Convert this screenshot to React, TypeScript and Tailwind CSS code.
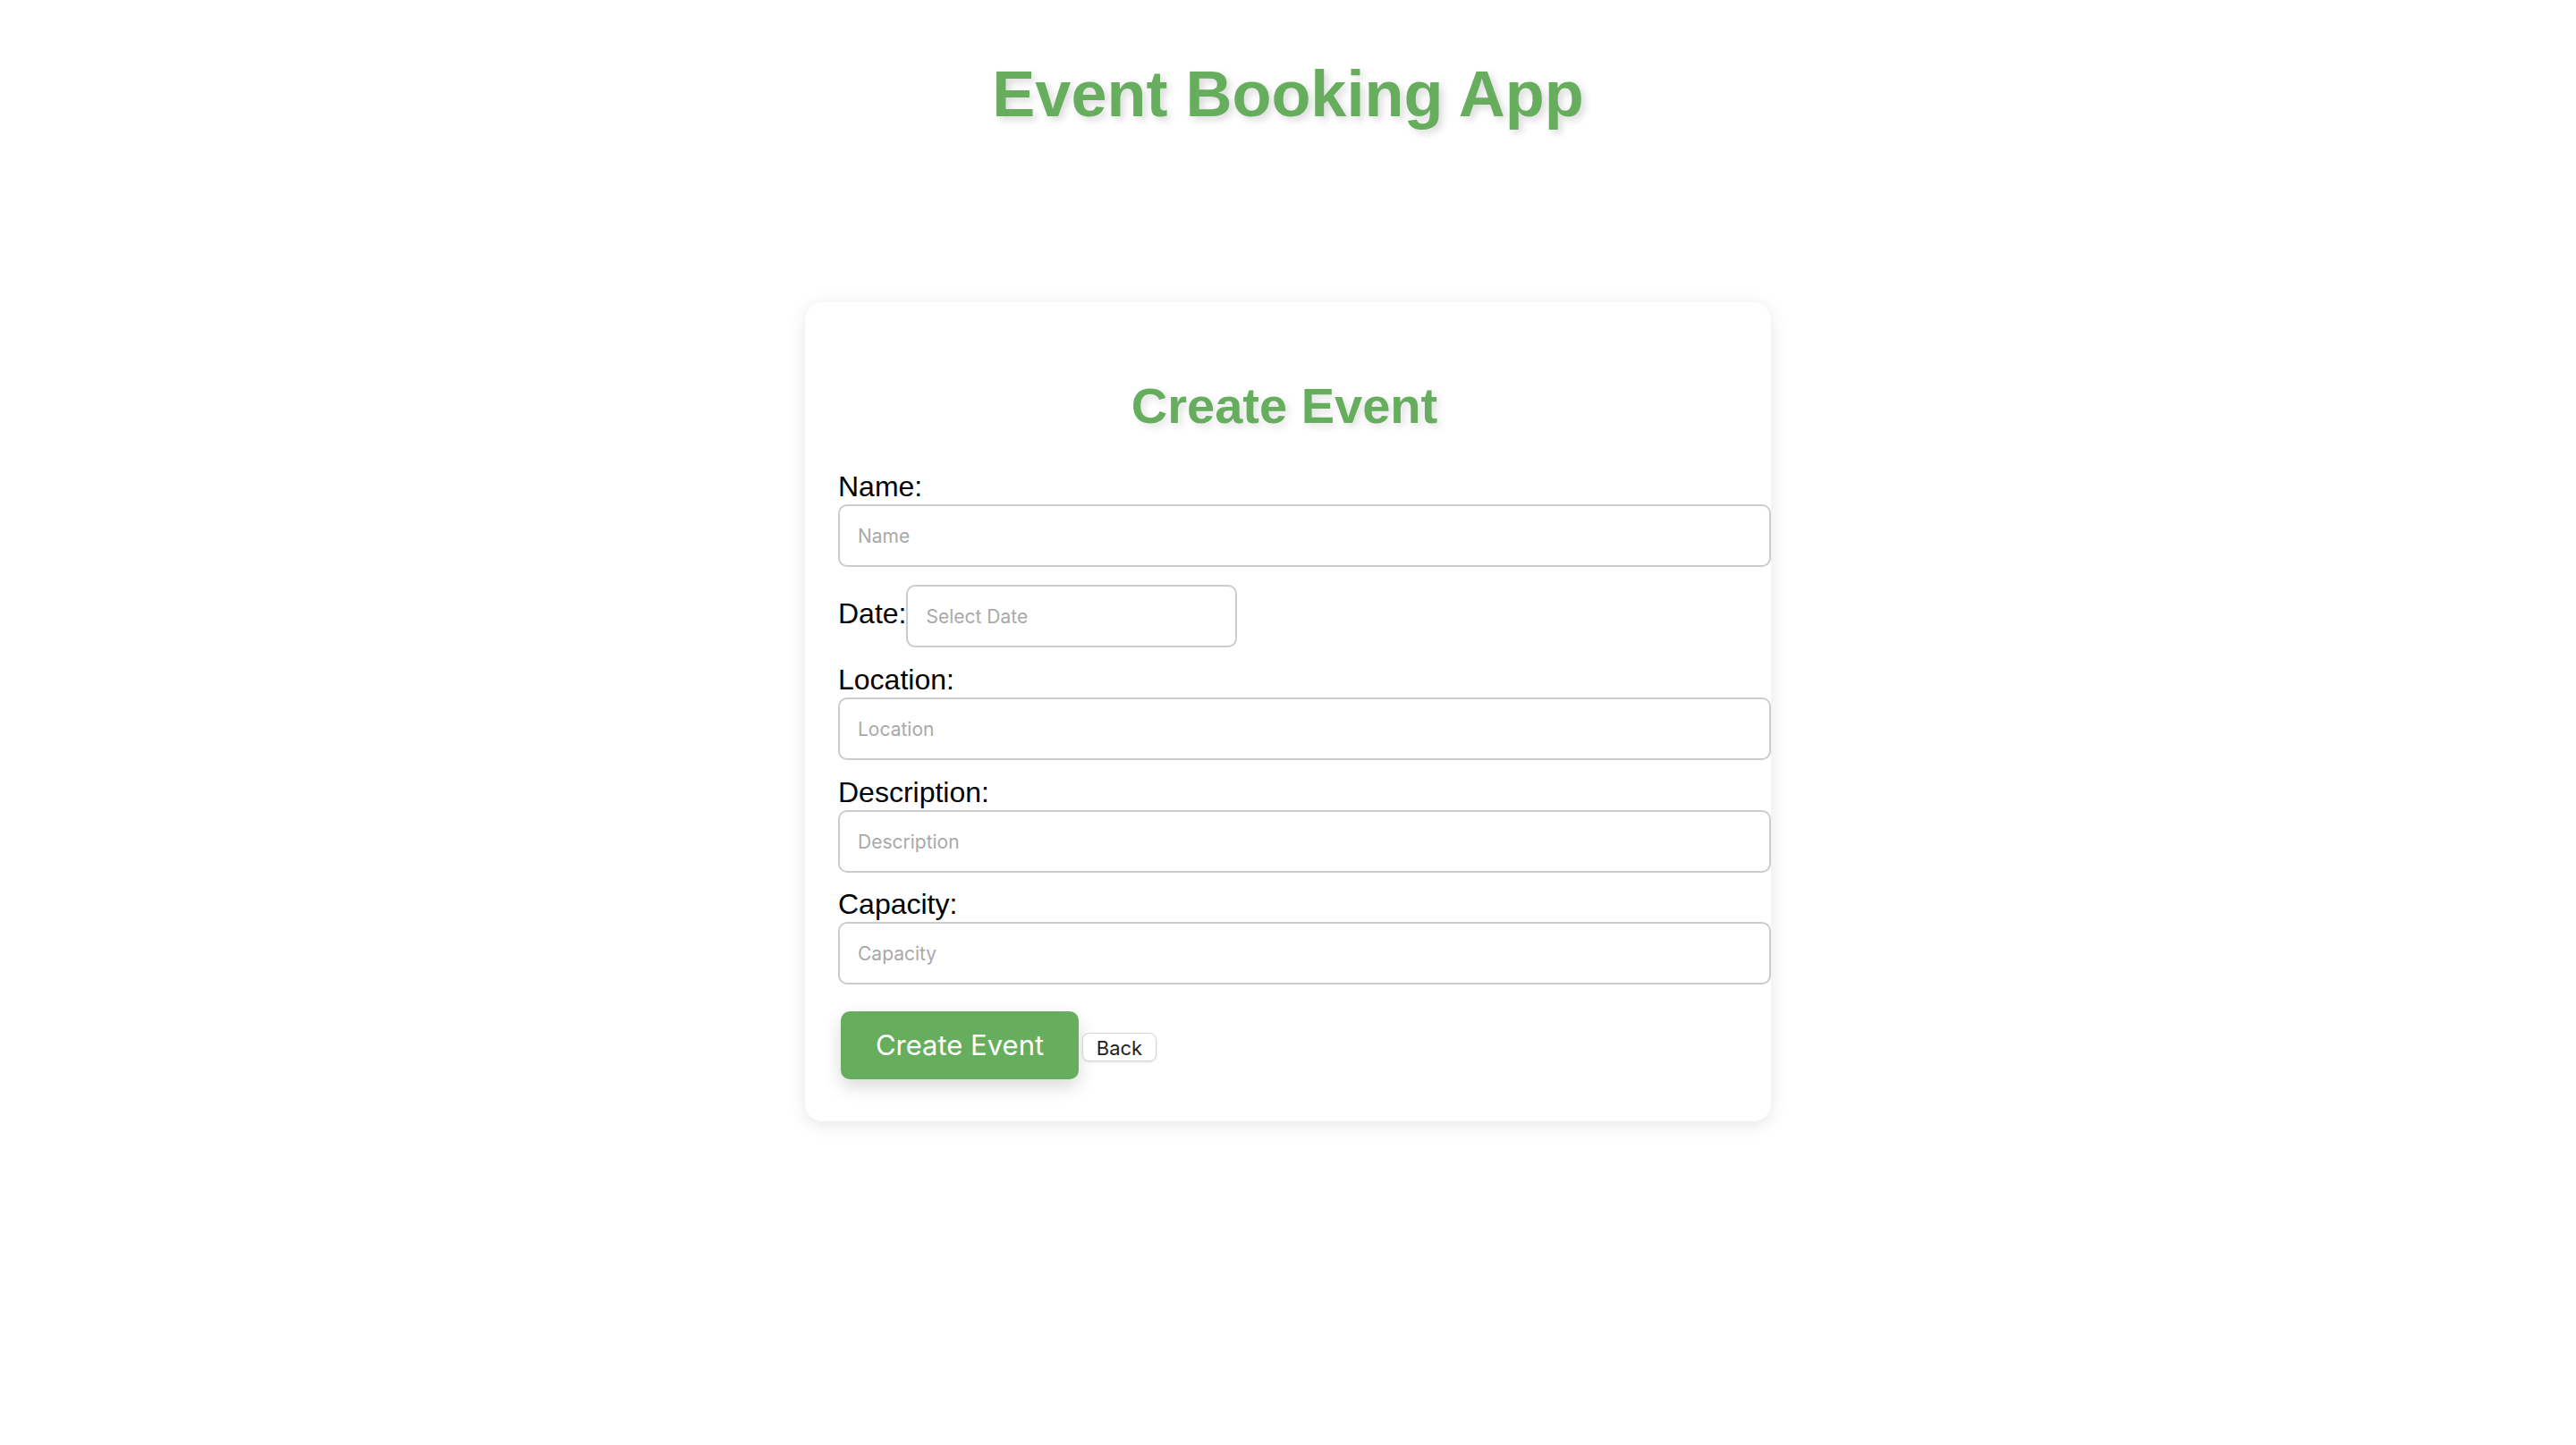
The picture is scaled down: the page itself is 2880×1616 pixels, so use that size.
import React from "react";

const inputCls =
  "block h-[70px] rounded-[10px] border-2 border-[#cccccc] bg-white px-[20px] text-[21px] text-black outline-none font-['Inter',sans-serif] placeholder:text-[#a9a9a9]";

const labelCls = "block text-[32px] leading-[37px] text-black";

export default function App() {
  return (
    <div className="min-h-screen bg-white pt-[64px] pb-[100px] font-['Liberation_Sans',Arial,sans-serif]">
      <h1 className="m-0 text-center text-[72px] font-bold leading-[82px] text-[#67ad5e] [text-shadow:4px_4px_8px_rgba(0,0,0,0.15)]">
        Event Booking App
      </h1>

      <div className="mx-auto mt-[192px] w-[1080px] rounded-[20px] bg-white pt-[84px] pb-[47px] pl-[37px] pr-[45px] shadow-[0_4px_20px_rgba(0,0,0,0.1)]">
        <h2 className="m-0 text-center text-[56px] font-bold leading-[63px] text-[#67ad5e] [text-shadow:4px_4px_8px_rgba(0,0,0,0.12)]">
          Create Event
        </h2>

        <label className={`${labelCls} mt-[41px]`}>Name:</label>
        <input className={`${inputCls} mt-[1px] w-[1043px]`} placeholder="Name" />

        <div className="mt-[20px] flex items-baseline">
          <label className="text-[32px] leading-[37px] text-black">Date:</label>
          <input className={`${inputCls} w-[370px]`} placeholder="Select Date" />
        </div>

        <label className={`${labelCls} mt-[18px]`}>Location:</label>
        <input className={`${inputCls} mt-[1px] w-[1043px]`} placeholder="Location" />

        <label className={`${labelCls} mt-[18px]`}>Description:</label>
        <input className={`${inputCls} mt-[1px] w-[1043px]`} placeholder="Description" />

        <label className={`${labelCls} mt-[17px]`}>Capacity:</label>
        <input className={`${inputCls} mt-[1px] w-[1043px]`} placeholder="Capacity" />

        <div className="mt-[30px] flex items-baseline gap-[4px] pl-[3px]">
          <button className="h-[76px] w-[266px] rounded-[10px] bg-[#67ad5e] text-[31px] text-white font-['Inter',sans-serif] shadow-[0_8px_20px_rgba(0,0,0,0.15)]">
            Create Event
          </button>
          <button className="h-[32px] w-[83px] rounded-[8px] border border-[#d6d6d6] bg-white text-[22px] text-[#222222] font-['Inter',sans-serif] shadow-[0_1px_3px_rgba(0,0,0,0.12)]">
            Back
          </button>
        </div>
      </div>
    </div>
  );
}
